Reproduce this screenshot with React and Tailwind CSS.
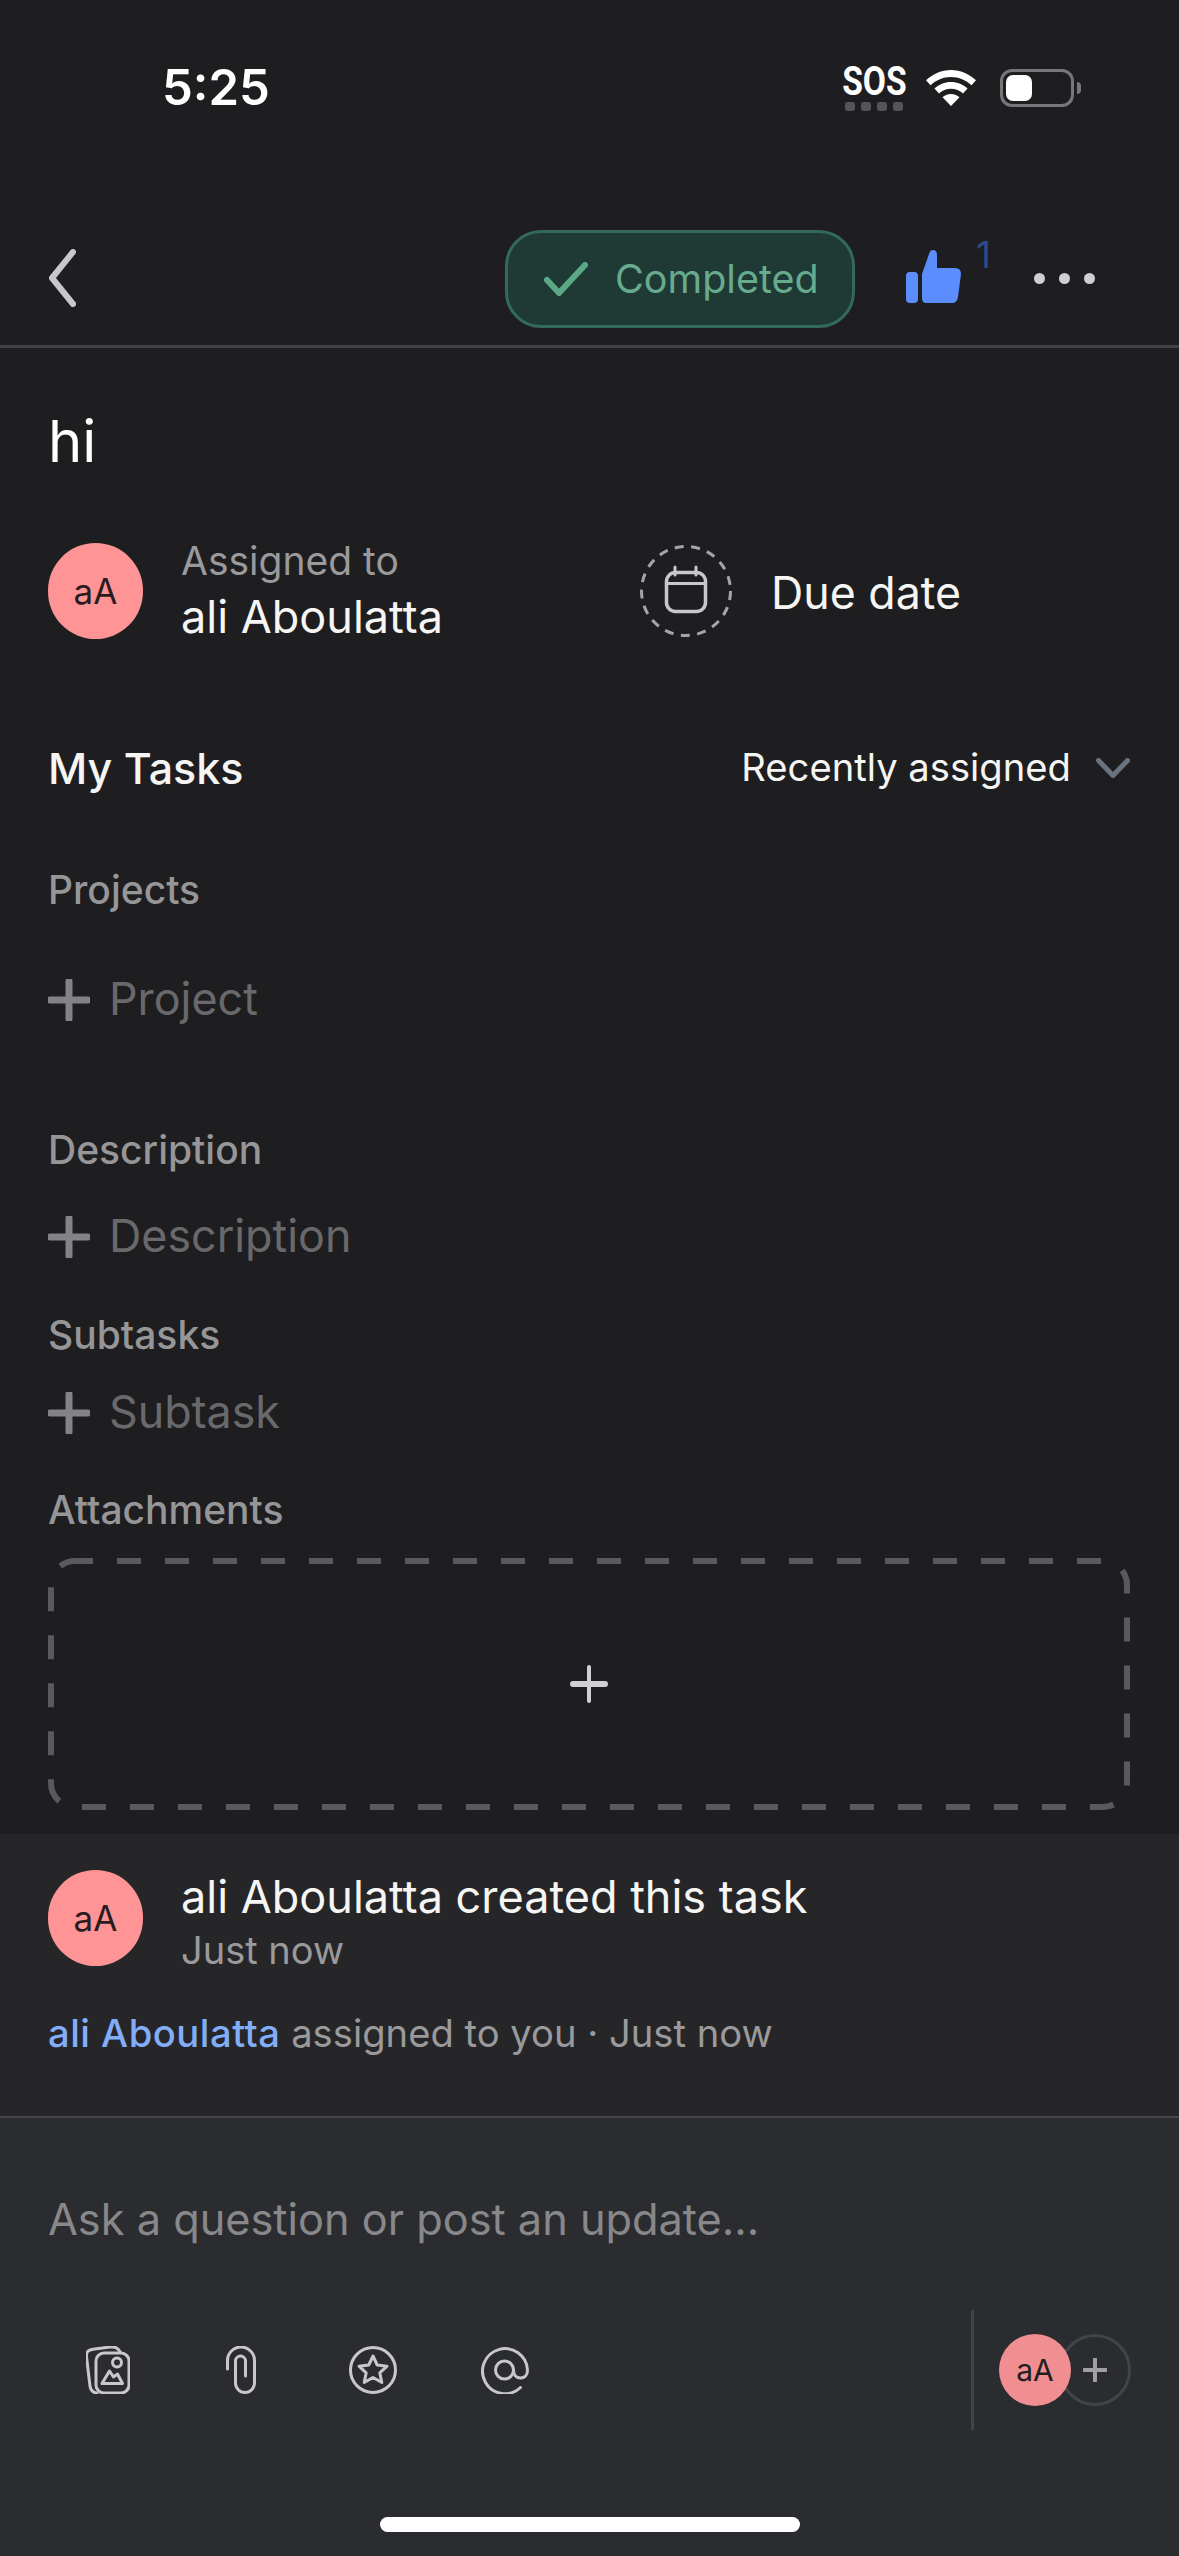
import React from 'react';

function Avatar({ small }) {
  return (
    <div
      className={
        small
          ? 'relative w-[72px] h-[72px] rounded-full bg-[#f18e92] flex items-center justify-center text-[30px] text-[#1f1f22]'
          : 'shrink-0 w-[95px] h-[96px] rounded-full bg-[#ff9497] flex items-center justify-center text-[35px] text-[#2a1c1e]'
      }
    >
      aA
    </div>
  );
}

function Plus() {
  return (
    <svg width="42" height="42" viewBox="0 0 42 42" className="shrink-0">
      <path d="M21 2v38M2 21h38" stroke="#838385" strokeWidth="7" strokeLinecap="round" />
    </svg>
  );
}

function AddRow({ label, className }) {
  return (
    <div className={`h-[70px] flex items-center gap-[19px] ${className}`}>
      <Plus />
      <span className="text-[44.800px] text-[#69696b]">{label}</span>
    </div>
  );
}

function Label({ children, className }) {
  return <div className={`h-[60px] flex items-center text-[39px] font-medium text-[#969698] ${className}`}>{children}</div>;
}

function StatusBar() {
  return (
    <div className="h-[176px] flex items-center justify-between pl-[162px] pr-[98px]">
      <span className="text-[49px] font-semibold text-white">5:25</span>
      <div className="flex items-center">
        <div className="flex flex-col items-center w-[62px]">
          <span className="h-[34px] leading-[34px] text-[40px] font-bold text-white scale-x-[0.84]" style={{ fontFamily: 'Roboto, sans-serif' }}>SOS</span>
          <div className="flex gap-[6px] mt-[3px]">
            <span className="w-[10px] h-[9px] rounded-[3px] bg-[#565658]" />
            <span className="w-[10px] h-[9px] rounded-[3px] bg-[#565658]" />
            <span className="w-[10px] h-[9px] rounded-[3px] bg-[#565658]" />
            <span className="w-[10px] h-[9px] rounded-[3px] bg-[#565658]" />
          </div>
        </div>
        <svg width="50" height="36" viewBox="0 0 50 36" className="ml-[21px]" fill="white">
          <path d="M25 0C15.500 0 7 3.800 0 10.200l4.500 5C10 10.200 17 7 25 7s15 3.200 20.500 8.200l4.500-5C43 3.800 34.500 0 25 0z" />
          <path d="M25 12c-6.500 0-12 2.500-16.500 6.500l4.500 5c3.200-3 7.400-4.700 12-4.700s8.800 1.700 12 4.700l4.500-5C37 14.500 31.500 12 25 12z" />
          <path d="M25 24c-3.500 0-6.500 1.300-8.500 3.300L25 36l8.500-8.700C31.500 25.300 28.500 24 25 24z" />
        </svg>
        <div className="flex items-center ml-[24px]">
          <div className="w-[74px] h-[38px] rounded-[12px] border-[3px] border-[#77777a] p-[3px]">
            <div className="w-[26px] h-full rounded-[7px] bg-white" />
          </div>
          <div className="w-[4px] h-[12px] ml-[3px] rounded-r-full bg-[#77777a]" />
        </div>
      </div>
    </div>
  );
}

function NavBar() {
  return (
    <div className="h-[172px] box-border pt-[36px] flex items-center border-b-[3px] border-[#424244] pl-[48px] pr-[84px]">
      <svg width="28" height="58" viewBox="0 0 28 58" fill="none" className="-mt-[2px]">
        <path d="M25 3L4 29l21 26" stroke="#c8c8ca" strokeWidth="6" strokeLinecap="round" strokeLinejoin="round" />
      </svg>
      <div className="ml-auto w-[350px] h-[98px] box-border rounded-[36px] border-[3px] border-[#33695a] bg-[#1f3a35] flex items-center pl-[36px]">
        <svg width="44" height="34" viewBox="0 0 44 34" fill="none">
          <path d="M3 18l12 13L41 3" stroke="#5aa886" strokeWidth="6" strokeLinecap="round" strokeLinejoin="round" />
        </svg>
        <span className="ml-[27px] mt-[2px] text-[39.500px] text-[#67ab8f]">Completed</span>
      </div>
      <div className="relative ml-[51px] w-[55px] h-[53px] -mt-[4px]">
        <svg width="55" height="53" viewBox="0 0 55 53" fill="#5b8dff">
          <rect x="0" y="22" width="12" height="31" rx="4" />
          <path d="M16 24L23 4Q24 0 27 0Q31 0 31 5V18H49Q55 18 55 24L52 47Q51 53 46 53H20Q16 53 16 48z" />
        </svg>
        <span className="absolute left-[70px] -top-[17px] text-[37px] leading-[44px] text-[#2c4a8c]">1</span>
      </div>
      <div className="ml-[73px] flex gap-[14px]">
        <span className="w-[11px] h-[11px] rounded-full bg-[#d0d0d2]" />
        <span className="w-[11px] h-[11px] rounded-full bg-[#d0d0d2]" />
        <span className="w-[11px] h-[11px] rounded-full bg-[#d0d0d2]" />
      </div>
    </div>
  );
}

function TaskBody() {
  return (
    <div className="pl-[48px] pr-[49px]">
      <div className="h-[186px] flex items-center text-[58px] text-white">hi</div>

      <div className="h-[114px] flex items-center">
        <Avatar />
        <div className="ml-[38px] w-[459px] -mt-[3px]">
          <div className="text-[39px] leading-[54px] text-[#9a9a9c]">Assigned to</div>
          <div className="text-[45px] leading-[58px] text-[#f5f5f3]">ali Aboulatta</div>
        </div>
        <svg width="92" height="92" viewBox="0 0 92 92" fill="none" className="shrink-0">
          <circle cx="46" cy="46" r="44.500" stroke="#a5a5a7" strokeWidth="3" strokeDasharray="9 7.500" />
          <rect x="26.500" y="27.500" width="39" height="39" rx="9" stroke="#c8c8ca" strokeWidth="3.500" />
          <path d="M26.500 38.500h39M35 22v8M56 22v8" stroke="#c8c8ca" strokeWidth="3" strokeLinecap="round" />
        </svg>
        <span className="ml-[39px] mt-[6px] text-[44.700px] text-[#f5f5f3]">Due date</span>
      </div>

      <div className="mt-[80px] h-[80px] flex items-center justify-between">
        <span className="text-[43px] font-medium text-[#f5f5f3]">My Tasks</span>
        <div className="flex items-center gap-[25px]">
          <span className="text-[38.200px] text-[#f5f5f3]">Recently assigned</span>
          <svg width="34" height="20" viewBox="0 0 34 20" fill="none">
            <path d="M2.500 2.500l14.500 15 14.500-15" stroke="#697380" strokeWidth="5" strokeLinecap="round" strokeLinejoin="round" />
          </svg>
        </div>
      </div>

      <Label className="mt-[52px]">Projects</Label>
      <AddRow label="Project" className="mt-[45px]" />
      <Label className="mt-[85px]">Description</Label>
      <AddRow label="Description" className="mt-[22px]" />
      <Label className="mt-[33px]">Subtasks</Label>
      <AddRow label="Subtask" className="mt-[13px]" />
      <Label className="mt-[32px]">Attachments</Label>

      <div className="relative mt-[18px] h-[252px] flex items-center justify-center">
        <svg width="1082" height="252" viewBox="0 0 1082 252" fill="none" className="absolute inset-0">
          <rect x="3" y="3" width="1076" height="246" rx="24" stroke="#5a5a5c" strokeWidth="6" strokeDasharray="24 24" strokeDashoffset="6" />
        </svg>
        <svg width="38" height="38" viewBox="0 0 38 38" fill="none">
          <path d="M19 2v34" stroke="#d0d0d2" strokeWidth="4" strokeLinecap="round" />
          <path d="M3 19h32" stroke="#d0d0d2" strokeWidth="6" strokeLinecap="round" />
        </svg>
      </div>
    </div>
  );
}

function Activity() {
  return (
    <div className="mt-[24px] h-[282px] box-border bg-[#262628] pl-[48px] pr-[49px] pt-[36px]">
      <div className="h-[96px] flex items-center">
        <Avatar />
        <div className="ml-[38px] mt-[6px]">
          <div className="text-[45px] leading-[58px] text-[#f5f5f3]">ali Aboulatta created this task</div>
          <div className="text-[38px] leading-[49px] text-[#9a9a9c]">Just now</div>
        </div>
      </div>
      <div className="mt-[34px] text-[38.200px] leading-[66px] text-[#9a9a9c]">
        <span className="font-medium tracking-[0.5px] text-[#82adf8]">ali Aboulatta</span> assigned to you · Just now
      </div>
    </div>
  );
}

function Composer() {
  return (
    <div className="flex-1 bg-[#2b2c30] border-t-[2px] border-[#434446] relative">
      <div className="h-[202px] pl-[48px] flex items-center text-[43.300px] text-[#88888a]">
        Ask a question or post an update...
      </div>
      <div className="h-[120px] -mt-[10px] flex items-center pl-[86px] pr-[48px]">
        <svg width="44" height="48" viewBox="0 0 44 48" fill="none" stroke="#c8c8ca" strokeWidth="3" strokeLinejoin="round" strokeLinecap="round">
          <rect x="10" y="7" width="33" height="40" rx="8" />
          <path d="M34 5.700C32 1.500 28 0.500 24 1L7 3.300C2 4 0 6 0.500 11L4 40C4.500 44 7 46.500 11 47.300" />
          <circle cx="31" cy="16.500" r="4.500" />
          <path d="M16 37.500L23.500 25L27.500 31L31.500 28L36.500 37.500z" />
        </svg>
        <svg width="30" height="48" viewBox="0 0 30 48" fill="none" stroke="#c8c8ca" strokeWidth="3" strokeLinecap="round" className="ml-[96px]">
          <path d="M1.500 23V14.500A13.500 13.500 0 0 1 28.500 14.500V37a9.500 9.500 0 0 1-19 0V15a5 5 0 0 1 10 0V30" />
        </svg>
        <svg width="48" height="48" viewBox="0 0 48 48" fill="none" stroke="#c8c8ca" strokeWidth="3" strokeLinejoin="round" className="ml-[93px]">
          <circle cx="24" cy="24" r="22.500" />
          <path d="M24 10l4.200 9 9.800 1.200-7.200 6.600 2 9.700L24 31.500l-8.800 5 2-9.700L10 20.200l9.800-1.200z" />
        </svg>
        <svg width="48" height="48" viewBox="0 0 48 48" fill="none" stroke="#c8c8ca" strokeWidth="3" strokeLinecap="round" className="ml-[84px]">
          <path d="M39.500 41.500A22.500 22.500 0 1 1 46.500 24c0 5-3 8-7 8s-7-3-7-8" />
          <circle cx="23.500" cy="24" r="9" />
        </svg>

        <div className="ml-auto w-[3px] h-[120px] bg-[#434446]" />
        <div className="relative ml-[25px] w-[132px] h-[72px]">
          <div className="absolute right-0 top-0 w-[72px] h-[72px] rounded-full border-[3px] border-[#434446] flex items-center justify-center">
            <svg width="24" height="24" viewBox="0 0 24 24" fill="none">
              <path d="M12 1v22M1 12h22" stroke="#a0a0a2" strokeWidth="4" strokeLinecap="round" />
            </svg>
          </div>
          <Avatar small />
        </div>
      </div>
      <div className="absolute left-[380px] bottom-[24px] w-[420px] h-[15px] rounded-full bg-white" />
    </div>
  );
}

export default function App() {
  return (
    <div className="w-[1179px] h-[2556px] flex flex-col bg-[#1e1e20]" style={{ fontFamily: 'Inter, sans-serif' }}>
      <StatusBar />
      <NavBar />
      <TaskBody />
      <Activity />
      <Composer />
    </div>
  );
}
